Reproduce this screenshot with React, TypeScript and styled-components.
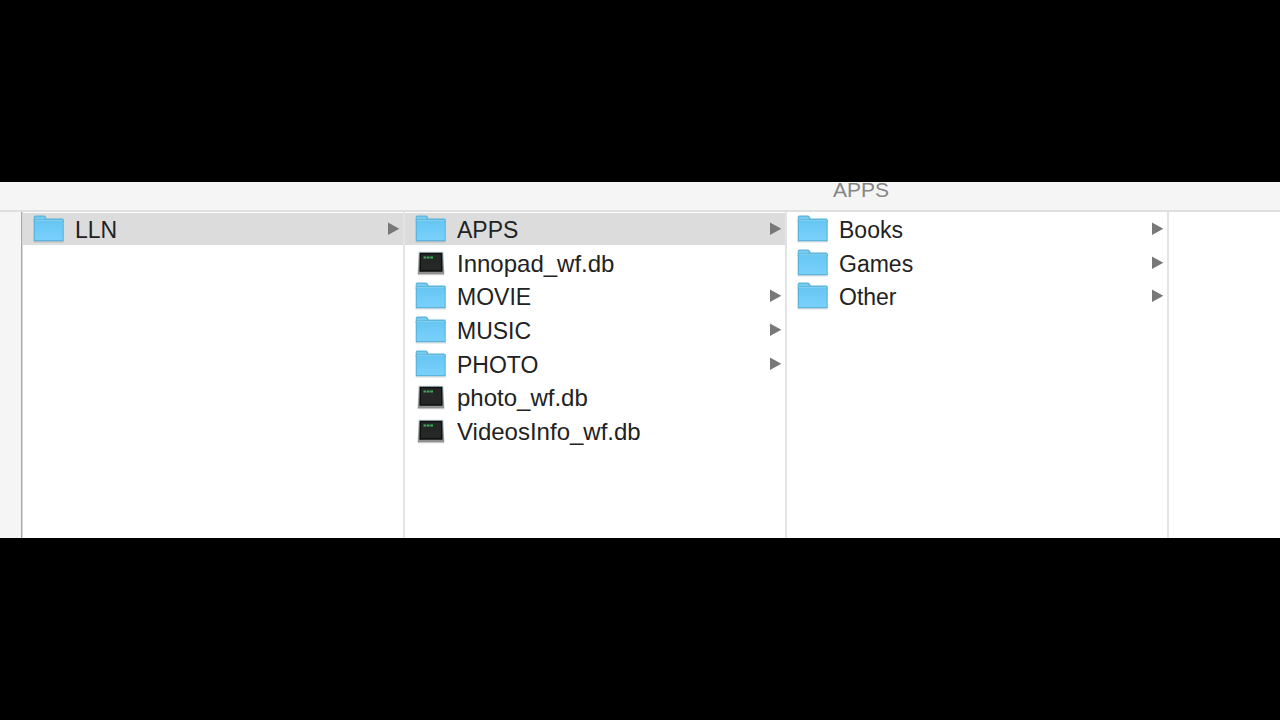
import React from "react";
import styled, { createGlobalStyle } from "styled-components";

const GlobalStyle = createGlobalStyle`
  * { box-sizing: border-box; }
  body {
    margin: 0;
    background: #000;
    font-family: "Liberation Sans", Arial, sans-serif;
  }
`;

const Stage = styled.main`
  min-height: 100vh;
  display: flex;
  flex-direction: column;
  justify-content: center;
`;

const Finder = styled.section`
  display: flex;
  flex-direction: column;
  min-height: 356px;
  overflow: hidden;
  background: #fff;
`;

const columns = "23px 382fr 382fr 382fr 111fr";

const TitleBar = styled.header`
  display: grid;
  grid-template-columns: ${columns};
  height: 30px;
  overflow: hidden;
  background: #f5f5f5;
  border-bottom: 2px solid #dfdfdf;
`;

const Title = styled.h1`
  grid-column: 4;
  margin: -6px 0 0;
  padding-left: 46px;
  font-size: 21px;
  line-height: 28px;
  font-weight: 400;
  color: #858585;
`;

const Browser = styled.div`
  flex: 1;
  display: grid;
  grid-template-columns: ${columns};
`;

const Sidebar = styled.aside`
  background: #f5f5f5;
  border-right: 1px solid #d8d8d8;
  &::after {
    content: "";
    display: block;
    height: 100%;
    border-right: 1px solid #a8a8a8;
  }
`;

const Column = styled.ul<{ $last?: boolean }>`
  display: grid;
  grid-auto-rows: 34px 33px 34px;
  margin: 0;
  padding: 1px 0 0;
  list-style: none;
  border-right: ${(p) => (p.$last ? "none" : "2px solid #e4e4e4")};
`;

const Row = styled.button<{ $selected?: boolean; $file?: boolean }>`
  display: flex;
  align-items: center;
  gap: 10px;
  width: 100%;
  height: 32px;
  border: 0;
  padding: 0 3px 0 10px;
  background: ${(p) => (p.$selected ? "#dcdcdc" : "transparent")};
  color: #222;
  font-family: inherit;
  font-size: ${(p) => (p.$file ? 24 : 23)}px;
  line-height: 30px;
  text-align: left;
`;

const Name = styled.span`
  flex: 1;
  padding-top: 2px;
  white-space: nowrap;
`;

const Icon = styled.svg`
  display: block;
  flex: none;
`;

const FolderIcon = () => (
  <Icon width="32" height="30" viewBox="0 0 32 30" aria-hidden="true">
    <defs>
      <linearGradient id="folder" x1="0" y1="0" x2="0" y2="1">
        <stop offset="0" stopColor="#67c6f3" />
        <stop offset="1" stopColor="#79d1fb" />
      </linearGradient>
    </defs>
    <path d="M.7 27.300h30v1.300H.7z" fill="#000" opacity=".13" />
    <path d="M.7 3.300q0-1.700 1.500-1.700h8.700q1 0 1.700 1l1.100 2h15.600q1.400 0 1.400 1.400V8H.7z" fill="#5cb5dd" />
    <path d="M1.900 2.700h9l1.700 2.500H1.700z" fill="#79ccec" />
    <path d="M.7 6.300h30v21H.7z" fill="#55acd4" />
    <path d="M1.700 7.200h28v19h-28z" fill="url(#folder)" />
    <path d="M1.700 6.200h28v1h-28z" fill="#8bd8f8" />
  </Icon>
);

const DatabaseIcon = () => (
  <Icon width="32" height="26" viewBox="0 0 32 26" aria-hidden="true">
    <defs>
      <linearGradient id="frame" x1="0" y1="0" x2="0" y2="1">
        <stop offset="0" stopColor="#bccbd0" />
        <stop offset="1" stopColor="#8c8c8c" />
      </linearGradient>
    </defs>
    <path d="M3.600 1.700h24.800l.8 19.300v3.500H2.800V21z" fill="url(#frame)" />
    <path d="M2.800 24h26.400v1.200H2.800z" fill="#c6c6c6" />
    <path d="M4.600 2.700h22.800l.2 19H4.400z" fill="#0d0f0f" />
    <path d="M6 4.200h20v16H6z" fill="#252727" />
    <path d="M8.500 7.500h9.500" stroke="#3fae5b" strokeWidth="1.800" strokeDasharray="2.700 .7" />
  </Icon>
);

const Arrow = () => (
  <Icon width="13" height="14" viewBox="0 0 13 14" aria-hidden="true">
    <path d="M1 .6l11.300 6.200L1 13z" fill="#787878" />
  </Icon>
);

type Entry = { name: string; file?: boolean; selected?: boolean };

const listing: Entry[][] = [
  [{ name: "LLN", selected: true }],
  [
    { name: "APPS", selected: true },
    { name: "Innopad_wf.db", file: true },
    { name: "MOVIE" },
    { name: "MUSIC" },
    { name: "PHOTO" },
    { name: "photo_wf.db", file: true },
    { name: "VideosInfo_wf.db", file: true },
  ],
  [{ name: "Books" }, { name: "Games" }, { name: "Other" }],
  [],
];

export default function App() {
  return (
    <>
      <GlobalStyle />
      <Stage>
        <Finder>
          <TitleBar>
            <Title>APPS</Title>
          </TitleBar>
          <Browser>
            <Sidebar />
            {listing.map((entries, i) => (
              <Column key={i} $last={i === listing.length - 1}>
                {entries.map((entry) => (
                  <li key={entry.name}>
                    <Row type="button" $selected={entry.selected} $file={entry.file}>
                      {entry.file ? <DatabaseIcon /> : <FolderIcon />}
                      <Name>{entry.name}</Name>
                      {!entry.file && <Arrow />}
                    </Row>
                  </li>
                ))}
              </Column>
            ))}
          </Browser>
        </Finder>
      </Stage>
    </>
  );
}
